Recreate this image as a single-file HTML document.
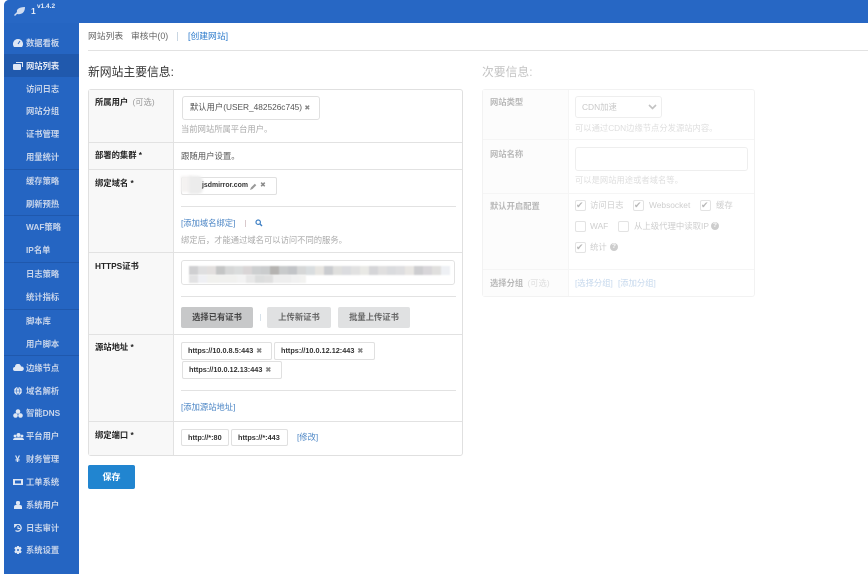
<!DOCTYPE html>
<html><head><meta charset="utf-8">
<style>
html,body{margin:0;padding:0;background:#fff}
body{width:868px;height:574px;overflow:hidden;position:relative;font-family:"Liberation Sans","Noto Sans CJK SC",sans-serif;font-size:8.4px;color:#444}
.a{position:absolute;white-space:nowrap;line-height:12px}
.b{position:absolute;box-sizing:border-box}
#side{left:4px;top:0;width:75px;height:574px;background:#2565c2;border-top-left-radius:5px}
#top{left:4px;top:0;width:864px;height:23px;background:#2767c4;border-top-left-radius:5px}
.n{left:26px;color:#c8d5eb;font-size:8.3px;font-weight:bold}
.sep{left:4px;width:75px;height:1px;background:#1f58ad}
.ic{position:absolute;left:13px;fill:#dfe7f4}
.lab{left:95px;font-weight:bold;color:#222;font-size:8.3px}
.hl{background:#e2e2e2;height:1px;position:absolute}
.v{position:absolute;background:#e2e2e2;width:1px}
.tag{position:absolute;box-sizing:border-box;border:1px solid #e0e0e0;border-radius:2px;background:#fff;font-size:7.3px;font-weight:bold;color:#333;line-height:16px;white-space:nowrap;padding-left:6px}
.x{color:#888;font-size:7px;margin-left:3px}
.hint{color:#aaa;font-size:8.3px}
.link{color:#4b85c5;font-size:8.3px}
.btn{position:absolute;top:307px;height:21px;border-radius:2px;background:#e0e1e2;color:#666;text-align:center;line-height:21px;font-weight:bold;font-size:8.3px}
#sec{position:absolute;left:0;top:0;width:868px;height:574px;opacity:.32;filter:blur(.3px)}
.ck{position:absolute;box-sizing:border-box;width:11px;height:11px;border:1px solid #aaa;border-radius:2px;background:#fff}
.blur{position:absolute;filter:blur(1px)}
.q{position:absolute;width:8px;height:8px;border-radius:50%;background:#666;color:#fff;font-size:6.5px;line-height:8px;text-align:center;font-weight:bold}
.cert i{display:block;width:9px;height:9px}
</style></head><body>

<div class="b" id="side"></div>
<div class="b" id="top"></div>
<svg class="a" style="left:14px;top:6px" width="12" height="10" viewBox="0 0 12 10"><path d="M0 9C1 8 2 7 3 6 2 3 6 1 11 1 11 6 8 9 3 8L1 10Z" fill="#cfdcf0"/></svg>
<div class="a" style="left:31px;top:4px;color:#e8eef8;font-weight:bold;font-size:8.5px;line-height:14px">1</div>
<div class="a" style="left:37px;top:1px;color:#e8eef8;font-weight:bold;font-size:6.5px">v1.4.2</div>

<div class="b" style="left:4px;top:54px;width:75px;height:23px;background:#2059ad"></div>
<div class="sep b" style="top:169px"></div><div class="sep b" style="top:215px"></div><div class="sep b" style="top:262px"></div><div class="sep b" style="top:309px"></div><div class="sep b" style="top:355px"></div>

<div class="a n" style="top:37px">数据看板</div>
<div class="a n" style="top:60px;color:#e6ecf6">网站列表</div>
<div class="a n" style="top:83px">访问日志</div>
<div class="a n" style="top:105px">网站分组</div>
<div class="a n" style="top:128px">证书管理</div>
<div class="a n" style="top:151px">用量统计</div>
<div class="a n" style="top:175px">缓存策略</div>
<div class="a n" style="top:198px">刷新预热</div>
<div class="a n" style="top:221px">WAF策略</div>
<div class="a n" style="top:244px">IP名单</div>
<div class="a n" style="top:268px">日志策略</div>
<div class="a n" style="top:291px">统计指标</div>
<div class="a n" style="top:315px">脚本库</div>
<div class="a n" style="top:338px">用户脚本</div>
<div class="a n" style="top:362px">边缘节点</div>
<div class="a n" style="top:385px">域名解析</div>
<div class="a n" style="top:407px">智能DNS</div>
<div class="a n" style="top:430px">平台用户</div>
<div class="a n" style="top:453px">财务管理</div>
<div class="a n" style="top:476px">工单系统</div>
<div class="a n" style="top:499px">系统用户</div>
<div class="a n" style="top:522px">日志审计</div>
<div class="a n" style="top:544px">系统设置</div>

<svg class="ic" style="top:39px" width="10" height="8" viewBox="0 0 10 8"><path d="M5 0A5 5 0 0 0 1 8H9A5 5 0 0 0 5 0Z"/><path d="M5 5L7 2" stroke="#2565c2" stroke-width="1"/></svg>
<svg class="ic" style="top:62px" width="10" height="8" viewBox="0 0 10 8"><path d="M3 0H10V5H9V1H3Z"/><rect x="0" y="2" width="8" height="6" rx="1"/></svg>
<svg class="ic" style="top:364px" width="11" height="7" viewBox="0 0 11 7"><path d="M2 7A2 2 0 0 1 2 3 3 3 0 0 1 8 2.500 2.200 2.200 0 0 1 9 7Z"/></svg>
<svg class="ic" style="top:387px;left:14px" width="8" height="8" viewBox="0 0 8 8"><circle cx="4" cy="4" r="4"/><path d="M0 4H8M4 0C2 2 2 6 4 8M4 0C6 2 6 6 4 8" stroke="#2565c2" stroke-width=".6" fill="none"/></svg>
<svg class="ic" style="top:409px" width="10" height="9" viewBox="0 0 10 9"><circle cx="5" cy="2.500" r="2.300"/><circle cx="2.500" cy="6.500" r="2.300"/><circle cx="7.500" cy="6.500" r="2.300"/></svg>
<svg class="ic" style="top:433px" width="11" height="7" viewBox="0 0 11 7"><circle cx="5.500" cy="2" r="2"/><circle cx="2" cy="3" r="1.400"/><circle cx="9" cy="3" r="1.400"/><path d="M0 7C0 5 2 4.500 5.500 4.500S11 5 11 7Z"/></svg>
<div class="a" style="left:15px;top:453px;color:#dfe7f4;font-weight:bold;font-size:9px">¥</div>
<svg class="ic" style="top:479px" width="10" height="6" viewBox="0 0 10 6"><path fill-rule="evenodd" d="M0 0H10V6H0ZM2 1.500V4.500H8V1.500Z"/></svg>
<svg class="ic" style="top:501px;left:14px" width="8" height="8" viewBox="0 0 8 8"><rect x="2" y="0" width="4" height="4" rx="1.500"/><path d="M0 8V6Q0 4 2 4H6Q8 4 8 6V8Z"/></svg>
<svg class="ic" style="top:524px;left:14px" width="8" height="8" viewBox="0 0 8 8"><path d="M1 1.500A3.500 3.500 0 1 1 1.500 6.500" fill="none" stroke="#dfe7f4" stroke-width="1.300"/><path d="M0 0L3 .5 .5 3ZM4 2V4.500H6" fill="none" stroke="#dfe7f4"/></svg>
<svg class="ic" style="top:546px;left:14px" width="8" height="8" viewBox="0 0 8 8"><path fill-rule="evenodd" d="M3 0H5L5.300 1.300 6.700 .8 7.700 2.500 6.700 3.500V4.500L7.700 5.500 6.700 7.200 5.300 6.700 5 8H3L2.700 6.700 1.300 7.200 .3 5.500 1.300 4.500V3.500L.3 2.500 1.300 .8 2.700 1.300ZM4 3A1 1 0 1 0 4 5 1 1 0 0 0 4 3Z"/></svg>

<!-- tabs -->
<div class="a" style="left:88px;top:30px;color:#666;font-size:8.800px">网站列表</div>
<div class="a" style="left:131px;top:30px;color:#666;font-size:8.800px">审核中(0)</div>
<div class="b" style="left:177px;top:32px;width:1px;height:9px;background:#c9d6e2"></div>
<div class="a" style="left:188px;top:30px;color:#2f7ccc;font-size:8.800px">[创建网站]</div>
<div class="hl" style="left:88px;top:50px;width:780px"></div>

<div class="a" style="left:88px;top:64px;font-size:11.800px;line-height:16px;color:#333">新网站主要信息:</div>

<!-- main table -->
<div class="b" style="left:88px;top:89px;width:375px;height:367px;border:1px solid #e0e0e0;border-radius:3px;background:#fff"></div>
<div class="b" style="left:89px;top:90px;width:84px;height:365px;background:#f8f8f8"></div>
<div class="v" style="left:173px;top:90px;height:365px"></div>
<div class="hl" style="left:89px;top:142px;width:373px"></div>
<div class="hl" style="left:89px;top:169px;width:373px"></div>
<div class="hl" style="left:89px;top:252px;width:373px"></div>
<div class="hl" style="left:89px;top:334px;width:373px"></div>
<div class="hl" style="left:89px;top:421px;width:373px"></div>

<div class="a lab" style="top:96px">所属用户 <span style="font-weight:normal;color:#999;margin-left:2px">(可选)</span></div>
<div class="a lab" style="top:149px">部署的集群 *</div>
<div class="a lab" style="top:177px">绑定域名 *</div>
<div class="a lab" style="top:260px">HTTPS证书</div>
<div class="a lab" style="top:341px">源站地址 *</div>
<div class="a lab" style="top:429px">绑定端口 *</div>

<div class="b" style="left:182px;top:96px;width:138px;height:24px;border:1px solid #e0e0e0;border-radius:3px"></div>
<div class="a" style="left:190px;top:101px;color:#555;font-size:8.300px">默认用户(USER_482526c745) <span style="color:#888;font-size:7px">✖</span></div>
<div class="a hint" style="left:181px;top:123px">当前网站所属平台用户。</div>
<div class="a" style="left:181px;top:150px;color:#555">跟随用户设置。</div>

<div class="tag" style="left:181px;top:177px;width:96px;height:18px"></div>
<div class="blur" style="left:181px;top:176px;width:11px;height:16px;background:#f4f2f1"></div>
<div class="blur" style="left:189px;top:176px;width:14px;height:18px;background:#ececec;border-radius:0 5px 5px 0"></div>
<div class="a" style="left:202px;top:180px;font-size:6.900px;font-weight:bold;color:#333">jsdmirror.com</div>
<svg class="a" style="left:250px;top:183px" width="7" height="7" viewBox="0 0 7 7"><path d="M0 7L1 4.500 4.800 .7 6.300 2.200 2.500 6Z" fill="#999"/></svg>
<div class="a" style="left:260px;top:180px;font-size:7px;color:#888">✖</div>
<div class="hl" style="left:181px;top:206px;width:275px"></div>
<div class="a link" style="left:181px;top:217px">[添加域名绑定]</div>
<div class="b" style="left:245px;top:220px;width:1px;height:7px;background:#d9c9cc"></div>
<svg class="a" style="left:255px;top:219px" width="8" height="8" viewBox="0 0 8 8"><circle cx="3.200" cy="3.200" r="2.200" fill="none" stroke="#3d7fc4" stroke-width="1.200"/><path d="M5 5L7 7" stroke="#3d7fc4" stroke-width="1.400"/></svg>
<div class="a hint" style="left:181px;top:234px">绑定后，才能通过域名可以访问不同的服务。</div>

<div class="b" style="left:181px;top:260px;width:274px;height:25px;border:1px solid #e2e2e2;border-radius:3px"></div>
<div class="cert" style="position:absolute;left:189px;top:266px;filter:blur(.8px);display:flex">
<i style="background:#cfcfd1"></i><i style="background:#dfdfe0"></i><i style="background:#e2dfde"></i><i style="background:#c4c5c5"></i><i style="background:#d6d7d7"></i><i style="background:#dadcdc"></i><i style="background:#d9d5d6"></i><i style="background:#cdcfd0"></i><i style="background:#cacccd"></i><i style="background:#b5b3b1"></i><i style="background:#c8cacb"></i><i style="background:#c2c4c7"></i><i style="background:#d6d7d7"></i><i style="background:#d9dddf"></i><i style="background:#e7e5e1"></i><i style="background:#cacccf"></i><i style="background:#dfdfdd"></i><i style="background:#dbdcdf"></i><i style="background:#e1e1e1"></i><i style="background:#e9e9e5"></i><i style="background:#d5d5d8"></i><i style="background:#e0dfdf"></i><i style="background:#dadbde"></i><i style="background:#dedee0"></i><i style="background:#e8e6e3"></i><i style="background:#cdcdd0"></i><i style="background:#d8d6d9"></i><i style="background:#e0dfde"></i><i style="background:#eef0f4"></i>
</div>
<div style="position:absolute;left:189px;top:275px;filter:blur(.8px);display:flex">
<i style="display:block;width:9px;height:8px;background:#e2e2e3"></i><i style="display:block;width:9px;height:8px;background:#eff0f4"></i><i style="display:block;width:12px;height:8px;background:#f1f1ee"></i><i style="display:block;width:18px;height:8px;background:#f1f1ef"></i><i style="display:block;width:9px;height:8px;background:#f3f3f3"></i><i style="display:block;width:9px;height:8px;background:#e8e8e8"></i><i style="display:block;width:9px;height:8px;background:#dcdddd"></i><i style="display:block;width:9px;height:8px;background:#dfdfdf"></i><i style="display:block;width:18px;height:8px;background:#eeeeee"></i><i style="display:block;width:9px;height:8px;background:#f1f1f1"></i><i style="display:block;width:6px;height:8px;background:#f3f3f1"></i>
</div>
<div class="hl" style="left:181px;top:296px;width:275px"></div>
<div class="btn" style="left:181px;width:72px;background:#c7c8c9;color:#444">选择已有证书</div>
<div class="b" style="left:260px;top:314px;width:1px;height:7px;background:#d8e2ea"></div>
<div class="btn" style="left:267px;width:64px">上传新证书</div>
<div class="btn" style="left:338px;width:72px">批量上传证书</div>

<div class="tag" style="left:181px;top:342px;width:91px;height:18px">https://10.0.8.5:443<span class="x">✖</span></div>
<div class="tag" style="left:274px;top:342px;width:101px;height:18px">https://10.0.12.12:443<span class="x">✖</span></div>
<div class="tag" style="left:182px;top:361px;width:100px;height:18px">https://10.0.12.13:443<span class="x">✖</span></div>
<div class="hl" style="left:181px;top:390px;width:275px"></div>
<div class="a link" style="left:181px;top:401px">[添加源站地址]</div>

<div class="tag" style="left:181px;top:429px;width:48px;height:17px">http://*:80</div>
<div class="tag" style="left:231px;top:429px;width:57px;height:17px">https://*:443</div>
<div class="a link" style="left:297px;top:431px">[修改]</div>

<div class="b" style="left:88px;top:465px;width:47px;height:24px;background:#2185d0;border-radius:2px;color:#fff;font-weight:bold;text-align:center;line-height:24px;font-size:9px">保存</div>

<!-- secondary -->
<div id="sec">
<div class="a" style="left:482px;top:64px;font-size:11.800px;line-height:16px;color:#444">次要信息:</div>
<div class="b" style="left:482px;top:89px;width:273px;height:208px;border:1px solid #d8d8d8;border-radius:3px"></div>
<div class="b" style="left:483px;top:90px;width:85px;height:206px;background:#f8f8f8"></div>
<div class="v" style="left:568px;top:90px;height:206px"></div>
<div class="hl" style="left:483px;top:139px;width:271px"></div>
<div class="hl" style="left:483px;top:193px;width:271px"></div>
<div class="hl" style="left:483px;top:269px;width:271px"></div>
<div class="a lab" style="left:490px;top:96px">网站类型</div>
<div class="a lab" style="left:490px;top:148px">网站名称</div>
<div class="a lab" style="left:490px;top:200px">默认开启配置</div>
<div class="a lab" style="left:490px;top:277px">选择分组 <span style="font-weight:normal;color:#999;margin-left:2px">(可选)</span></div>
<div class="b" style="left:575px;top:96px;width:87px;height:22px;border:1px solid #ccc;border-radius:3px"></div>
<div class="a" style="left:582px;top:101px;color:#555">CDN加速</div>
<svg class="a" style="left:648px;top:104px" width="9" height="6" viewBox="0 0 9 6"><path d="M1 1L4.500 4.500 8 1" fill="none" stroke="#444" stroke-width="1.600"/></svg>
<div class="a hint" style="left:575px;top:122px;color:#999">可以通过CDN边缘节点分发源站内容。</div>
<div class="b" style="left:575px;top:147px;width:173px;height:24px;border:1px solid #ccc;border-radius:3px"></div>
<div class="a hint" style="left:575px;top:174px;color:#999">可以是网站用途或者域名等。</div>

<div class="ck" style="left:575px;top:200px"></div><div class="a" style="left:576px;top:199px;font-size:9px;color:#222">✔</div>
<div class="a" style="left:590px;top:199px;color:#666">访问日志</div>
<div class="ck" style="left:633px;top:200px"></div><div class="a" style="left:634px;top:199px;font-size:9px;color:#222">✔</div>
<div class="a" style="left:649px;top:199px;color:#666">Websocket</div>
<div class="ck" style="left:700px;top:200px"></div><div class="a" style="left:701px;top:199px;font-size:9px;color:#222">✔</div>
<div class="a" style="left:716px;top:199px;color:#666">缓存</div>
<div class="ck" style="left:575px;top:221px"></div>
<div class="a" style="left:590px;top:220px;color:#666">WAF</div>
<div class="ck" style="left:618px;top:221px"></div>
<div class="a" style="left:634px;top:220px;color:#666">从上级代理中读取IP</div>
<div class="q" style="left:711px;top:222px">?</div>
<div class="ck" style="left:575px;top:242px"></div><div class="a" style="left:576px;top:241px;font-size:9px;color:#222">✔</div>
<div class="a" style="left:590px;top:241px;color:#666">统计</div>
<div class="q" style="left:610px;top:243px">?</div>
<div class="a link" style="left:575px;top:277px">[选择分组]</div>
<div class="a link" style="left:618px;top:277px">[添加分组]</div>
</div>

</body></html>
